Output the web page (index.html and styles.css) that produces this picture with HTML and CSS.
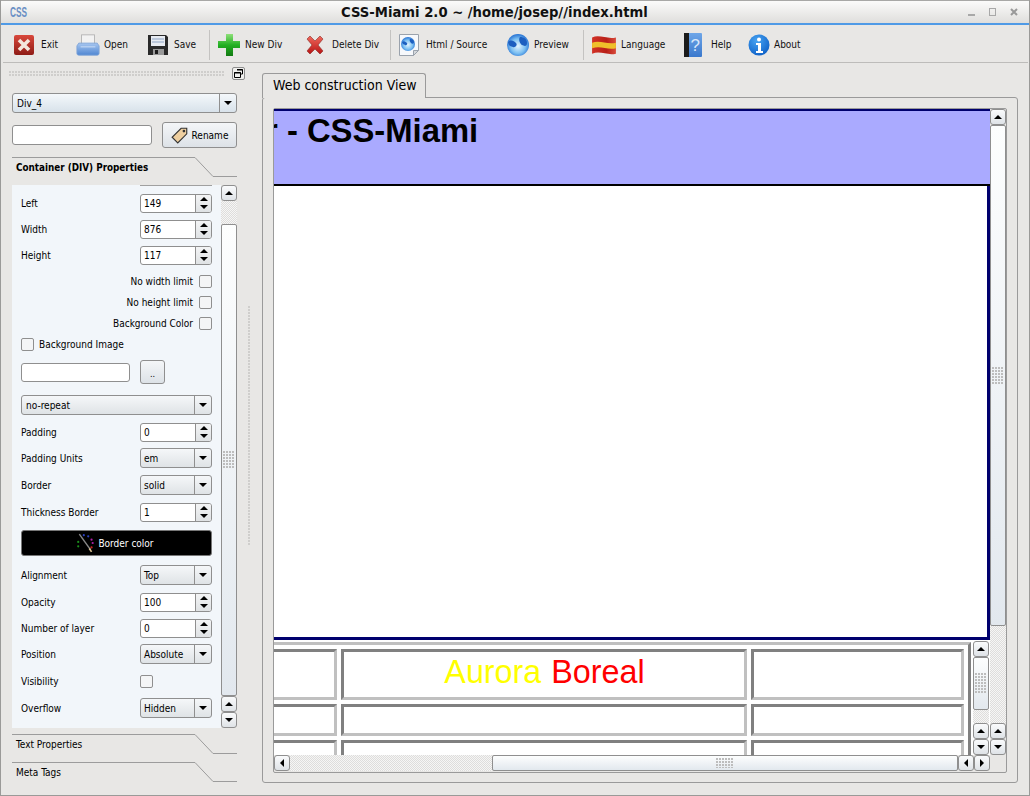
FILE: index.html
```html
<!DOCTYPE html>
<html lang="en">
<head>
<meta charset="utf-8">
<title>CSS-Miami 2.0</title>
<link rel="stylesheet" href="styles.css">
</head>
<body>
<svg class="defs" width="0" height="0" aria-hidden="true">
  <defs>
    <linearGradient id="gRed" x1="0" y1="0" x2="0" y2="1"><stop offset="0" stop-color="#d9483c"/><stop offset="1" stop-color="#8e1c16"/></linearGradient>
    <linearGradient id="gTray" x1="0" y1="0" x2="0" y2="1"><stop offset="0" stop-color="#a6c6f0"/><stop offset="1" stop-color="#4f86d2"/></linearGradient>
    <linearGradient id="gGreen" x1="0" y1="0" x2="0" y2="1"><stop offset="0" stop-color="#8fe07a"/><stop offset=".5" stop-color="#22b022"/><stop offset="1" stop-color="#127a12"/></linearGradient>
    <linearGradient id="gX" x1="0" y1="0" x2="0" y2="1"><stop offset="0" stop-color="#f0685c"/><stop offset="1" stop-color="#b81414"/></linearGradient>
    <radialGradient id="gGlobe" cx=".5" cy=".55" r=".6"><stop offset="0" stop-color="#e6f5fd"/><stop offset=".55" stop-color="#7cc0f2"/><stop offset="1" stop-color="#1260cc"/></radialGradient>
    <linearGradient id="gFlag" x1="0" y1="0" x2="1" y2="0"><stop offset="0" stop-color="#d23226"/><stop offset=".6" stop-color="#b82018"/><stop offset="1" stop-color="#d84a3a"/></linearGradient>
    <linearGradient id="gBook" x1="0" y1="0" x2="0" y2="1"><stop offset="0" stop-color="#6ea6e8"/><stop offset="1" stop-color="#3a78cc"/></linearGradient>
    <radialGradient id="gInfo" cx=".4" cy=".3" r=".8"><stop offset="0" stop-color="#48a4f2"/><stop offset="1" stop-color="#0a5cc4"/></radialGradient>
  </defs>
</svg>
<div class="window">
  <header class="titlebar">
    <span class="app-logo">CSS</span>
    <span class="title">CSS-Miami 2.0 ~ /home/josep//index.html</span>
    <div class="win-btns">
      <svg width="10" height="10" viewBox="0 0 10 10"><rect x="1" y="7" width="7" height="2" fill="#a8a8a8"/></svg>
      <svg width="10" height="10" viewBox="0 0 10 10"><rect x="1.500" y="1.500" width="6" height="7" fill="none" stroke="#a8a8a8"/></svg>
      <svg width="10" height="10" viewBox="0 0 10 10"><path d="M2 2l6 6M8 2l-6 6" stroke="#999" stroke-width="2"/></svg>
    </div>
  </header>
  <nav class="toolbar">
    <button class="tool t-exit"><svg width="24" height="24" viewBox="0 0 24 24"><rect x="2" y="2" width="20" height="20" rx="2" fill="url(#gRed)"/><path d="M7 7l10 10M17 7L7 17" stroke="#f4e6dc" stroke-width="3.600"/></svg><span>Exit</span></button>
    <button class="tool t-open"><svg width="24" height="24" viewBox="0 0 26 24"><rect x="6" y="1" width="14" height="11" fill="#f2f2f2" stroke="#b4b4b4"/><path d="M3 10h20l2 3v8a2 2 0 0 1-2 2H3a2 2 0 0 1-2-2v-8z" fill="url(#gTray)" stroke="#7ea4d8"/><path d="M5 14h16" stroke="#cfe0f6"/></svg><span>Open</span></button>
    <button class="tool t-save"><svg width="22" height="24" viewBox="0 0 22 24"><path d="M1 2h18l2 2v18H1z" fill="#2a2a2a"/><rect x="4" y="3" width="14" height="10" fill="#e8ecf2"/><path d="M5 6h12M5 9h12" stroke="#8ea4c4"/><rect x="6" y="16" width="11" height="6" fill="#9a9a9a"/><rect x="8" y="17" width="3" height="4" fill="#1c1c1c"/></svg><span>Save</span></button>
    <i class="tsep"></i>
    <button class="tool t-new"><svg width="24" height="24" viewBox="0 0 24 24"><path d="M9 1h7v7h7v7h-7v8H9v-8H1V8h8z" fill="url(#gGreen)"/></svg><span>New Div</span></button>
    <button class="tool t-del"><svg width="22" height="22" viewBox="1 0 20 22"><path d="M3 5l3-3 5 5 5-5 3 3-5 6 5 6-3 3-5-5-5 5-3-3 5-6z" fill="url(#gX)" stroke="#8c2a24" stroke-width=".6"/></svg><span>Delete Div</span></button>
    <i class="tsep"></i>
    <button class="tool t-html"><svg width="20" height="24" viewBox="0 0 20 24"><path d="M.5 1.500h19v16l-5 5H.5z" fill="#f6f8fb" stroke="#9aa2ac"/><path d="M19.500 17.500h-5v5z" fill="#d4d8dc" stroke="#9aa2ac"/><circle cx="9" cy="11" r="7" fill="url(#gGlobe)"/><path d="M3 9c2-2 4 0 5 1s-1 3-2 2-2 0-3-3zM11 6c2 0 4 1 4 3s-2 2-3 1-2-3-1-4z" fill="#1d5fc0"/></svg><span>Html / Source</span></button>
    <button class="tool t-prev"><svg width="24" height="24" viewBox="0 0 24 24"><circle cx="12" cy="12" r="11" fill="url(#gGlobe)"/><path d="M2 9c3-3 6-1 8 1s-1 5-3 4-4 0-5-5zM14 4c4 0 7 2 7 6s-3 3-5 2-4-6-2-8z" fill="#1d5fc0"/></svg><span>Preview</span></button>
    <i class="tsep"></i>
    <button class="tool t-lang"><svg width="26" height="22" viewBox="0 0 24 20"><path d="M1 3c7-3 14 2 22 0v15c-8 2-14-3-22 0z" fill="url(#gFlag)"/><path d="M1 8c7-3 14 2 22 0v5c-8 2-14-3-22 0z" fill="#efc02a"/></svg><span>Language</span></button>
    <button class="tool t-help"><svg width="18" height="26" viewBox="0 0 18 26"><rect x="0" y="1" width="18" height="24" rx="1" fill="url(#gBook)"/><rect x="0" y="1" width="5" height="24" fill="#1b1b1b"/><text x="6.500" y="19" class="q">?</text></svg><span>Help</span></button>
    <button class="tool t-about"><svg width="22" height="24" viewBox="0 0 22 24"><circle cx="11" cy="12" r="10.500" fill="url(#gInfo)"/><circle cx="11" cy="6.500" r="2" fill="#fff"/><path d="M8 10h5v8h2v2H8v-2h2v-6H8z" fill="#fff"/></svg><span>About</span></button>
  </nav>

  <div class="main">
    <aside class="side">
      <div class="dock-top"><div class="grip"></div><div class="float"><svg width="9" height="9" viewBox="0 0 9 9"><path d="M3 .5h5.500V5H7M.5 3.500h6v5h-6z" fill="none" stroke="#000"/><path d="M3 1h6M0 4h7" stroke="#000"/></svg></div></div>
      <div class="combo c-div"><span>Div_4</span><b><i class="dn"></i></b></div>
      <div class="rename-row">
        <div class="input r-input"></div>
        <div class="btn r-btn"><svg width="18" height="18" viewBox="0 0 16 16"><path d="M9 2h5v5l-8 8-5-5z" fill="#eecfa0" stroke="#333"/><circle cx="11.500" cy="4.500" r="1.200" fill="#333"/></svg><span>Rename</span></div>
      </div>
      <div class="tab-h t-active"><span class="bold">Container (DIV) Properties</span><svg class="tabline" width="225" height="20" viewBox="0 0 225 20"><path d="M0 .5h183L201 19.500h24" fill="none" stroke="#9c9c9c"/></svg></div>
      <div class="pane">
        <div class="form">
          <div class="clip-top"></div>
          <div class="row r-left"><label>Left</label><div class="spin"><span>149</span><b><i class="up"></i><i class="dn"></i></b></div></div>
          <div class="row"><label>Width</label><div class="spin"><span>876</span><b><i class="up"></i><i class="dn"></i></b></div></div>
          <div class="row"><label>Height</label><div class="spin"><span>117</span><b><i class="up"></i><i class="dn"></i></b></div></div>
          <div class="crow c-first"><label>No width limit</label><i class="check"></i></div>
          <div class="crow"><label>No height limit</label><i class="check"></i></div>
          <div class="crow"><label>Background Color</label><i class="check"></i></div>
          <div class="crow left"><i class="check"></i><label>Background Image</label></div>
          <div class="file-row"><div class="input f-input"></div><div class="btn f-btn">..</div></div>
          <div class="combo c-rep"><span>no-repeat</span><b><i class="dn"></i></b></div>
          <div class="row r-pad"><label>Padding</label><div class="spin"><span>0</span><b><i class="up"></i><i class="dn"></i></b></div></div>
          <div class="row"><label>Padding Units</label><div class="combo c-s"><span>em</span><b><i class="dn"></i></b></div></div>
          <div class="row r-c2"><label>Border</label><div class="combo c-s"><span>solid</span><b><i class="dn"></i></b></div></div>
          <div class="row r-c3"><label>Thickness Border</label><div class="spin"><span>1</span><b><i class="up"></i><i class="dn"></i></b></div></div>
          <div class="color-btn"><svg width="20" height="20" viewBox="0 0 18 18"><g fill="#1b8f1b"><circle cx="2" cy="8" r="1"/><circle cx="2" cy="12" r="1"/></g><g fill="#2a3fbf"><circle cx="7" cy="2" r="1"/><circle cx="11" cy="3" r="1"/></g><g fill="#b01fa8"><circle cx="14" cy="6" r="1"/><circle cx="15" cy="9" r="1"/></g><circle cx="14" cy="13" r="1" fill="#c22"/><path d="M3 1l10 14" stroke="#888" stroke-width="1.300"/><path d="M12 14l2 3" stroke="#d8c090" stroke-width="1.500"/></svg><span>Border color</span></div>
          <div class="row r-al"><label>Alignment</label><div class="combo c-s"><span>Top</span><b><i class="dn"></i></b></div></div>
          <div class="row r-op"><label>Opacity</label><div class="spin"><span>100</span><b><i class="up"></i><i class="dn"></i></b></div></div>
          <div class="row"><label>Number of layer</label><div class="spin"><span>0</span><b><i class="up"></i><i class="dn"></i></b></div></div>
          <div class="row"><label>Position</label><div class="combo c-s"><span>Absolute</span><b><i class="dn"></i></b></div></div>
          <div class="row r-vis"><label>Visibility</label><div class="vis-cell"><i class="check"></i></div></div>
          <div class="row r-ov"><label>Overflow</label><div class="combo c-s"><span>Hidden</span><b><i class="dn"></i></b></div></div>
        </div>
        <div class="vbar side-bar">
          <div class="sb-btn"><i class="up"></i></div>
          <div class="sb-track small"></div>
          <div class="sb-thumb long"><div class="dots d4x6"></div></div>
          <div class="sb-btn"><i class="up"></i></div>
          <div class="sb-btn"><i class="dn"></i></div>
        </div>
      </div>
      <div class="tab-h t-text"><span>Text Properties</span><svg class="tabline" width="225" height="20" viewBox="0 0 225 20"><path d="M0 .5h183L201 19.500h24" fill="none" stroke="#9c9c9c"/></svg></div>
      <div class="tab-h t-meta"><span>Meta Tags</span><svg class="tabline" width="225" height="20" viewBox="0 0 225 20"><path d="M0 .5h183L201 19.500h24" fill="none" stroke="#9c9c9c"/></svg></div>
    </aside>
    <div class="splitter"><div class="split-dots"></div></div>
    <section class="work">
      <div class="tab-top">Web construction View</div>
      <div class="tab-pane">
        <div class="view">
          <div class="viewport">
            <div class="page">
              <div class="hero"><h1>r - CSS-Miami</h1></div>
              <div class="canvas-div"></div>
              <div class="outer-table">
                <div class="t-row h1r">
                  <div class="cell c1"></div>
                  <div class="cell c2"><span class="aurora"><em>Aurora</em> <strong>Boreal</strong></span></div>
                  <div class="cell c3"></div>
                </div>
                <div class="t-row h2r">
                  <div class="cell c1"></div><div class="cell c2"></div><div class="cell c3"></div>
                </div>
                <div class="t-row h3r">
                  <div class="cell c1"></div><div class="cell c2"></div><div class="cell c3"></div>
                </div>
              </div>
              <div class="inner-v">
                <div class="sb-btn"><i class="up"></i></div>
                <div class="sb-thumb iv"><div class="dots d4x5"></div></div>
                <div class="sb-track"></div>
                <div class="sb-btn"><i class="up"></i></div>
                <div class="sb-btn"><i class="dn"></i></div>
              </div>
            </div>
            <div class="vbar main-v">
              <div class="sb-btn"><i class="up"></i></div>
              <div class="sb-thumb mv"><div class="dots d4x6"></div></div>
              <div class="sb-track"></div>
              <div class="sb-btn"><i class="up"></i></div>
              <div class="sb-btn"><i class="dn"></i></div>
            </div>
          </div>
          <div class="hbar">
            <div class="sb-btn h"><i class="lf"></i></div>
            <div class="sb-track h1"></div>
            <div class="sb-thumb hz"><div class="dots d6x3"></div></div>
            <div class="sb-btn h"><i class="lf"></i></div>
            <div class="sb-btn h"><i class="rt"></i></div>
            <div class="corner"></div>
          </div>
        </div>
      </div>
    </section>
  </div>
</div>
</body>
</html>
```

FILE: styles.css
```css
* { box-sizing: border-box; }
html, body { margin: 0; padding: 0; }
body { width: 1030px; height: 796px; overflow: hidden; background: #e8e7e5; font-family: "DejaVu Sans Condensed", "DejaVu Sans", sans-serif; font-stretch: condensed; font-size: 10px; color: #000; }
.defs { position: absolute; }
.window { width: 1030px; height: 796px; display: flex; flex-direction: column; border-left: 1px solid #9a9a98; border-right: 1px solid #9a9a98; border-bottom: 1px solid #9a9a98; position: relative; }
.titlebar { height: 25px; flex: none; display: flex; align-items: center; position: relative; border-top: 1px solid #a8a8a6; border-bottom: 2px solid #4f9ae6; background: linear-gradient(#fbfbfa, #dfdedc); padding: 0 0 1px 9px; }
.app-logo { font-family: "Liberation Sans", sans-serif; font-weight: 700; font-size: 15px; color: #6a8fc4; transform: scaleX(.55); transform-origin: left center; width: 20px; }
.title { position: absolute; left: 340px; top: 4px; font-family: "DejaVu Sans", sans-serif; font-stretch: normal; font-size: 13.200px; font-weight: 700; color: #111; white-space: nowrap; }
.win-btns { margin-left: auto; display: flex; gap: 11px; padding-right: 10px; }
.toolbar { height: 38px; flex: none; display: flex; align-items: center; border-bottom: 1px solid #bdbcba; margin: 0 1px 0 2px; padding: 2px 0 0 9px; position: relative; }
.tool { appearance: none; border: 0; background: none; padding: 0; margin: 0; height: 30px; display: flex; align-items: center; font: inherit; color: #111; white-space: nowrap; flex: none; }
.t-exit { width: 64px; gap: 5px; }
.t-open { width: 71px; gap: 4px; }
.t-save { width: 62px; gap: 5px; }
.t-new { width: 87px; gap: 4px; margin-left: 7px; }
.t-del { width: 86px; gap: 6px; }
.t-html { width: 107px; gap: 7px; margin-left: 8px; }
.t-prev { width: 77px; gap: 4px; }
.t-lang { width: 93px; gap: 4px; margin-left: 7px; }
.t-help { width: 64px; gap: 9px; }
.t-about { gap: 4px; }
.q { font: 17px "Liberation Sans", sans-serif; fill: #d8e8fa; }
.tsep { width: 1px; height: 30px; background: #c4c3c1; flex: none; }
.main { flex: 1; display: flex; min-height: 0; }
.side { width: 237px; flex: none; padding-left: 11px; display: flex; flex-direction: column; }
.dock-top { height: 30px; width: 236px; flex: none; display: flex; align-items: flex-start; gap: 7px; padding-top: 4px; margin-left: -3px; }
.grip { width: 216px; flex: none; height: 5px; margin-top: 4px; background-image: radial-gradient(circle at 1px 1px, #cfcecc 1px, transparent 1.200px); background-size: 3px 3px; }
.float { width: 13px; height: 13px; flex: none; border: 1px solid #8d8d8d; border-radius: 2px; background: #f0f0ee; display: flex; align-items: center; justify-content: center; }
.combo { display: flex; align-items: center; height: 20px; border: 1px solid #8f8f8f; border-radius: 3px; background: linear-gradient(#f5f7f9, #dfe3e6); overflow: hidden; }
.combo span { flex: 1; padding-left: 4px; white-space: nowrap; }
.combo b { width: 17px; height: 100%; border-left: 1px solid #8f8f8f; display: flex; align-items: center; justify-content: center; flex: none; }
.c-div { width: 225px; background: linear-gradient(#f4f8fb, #d8e2ea); }
.up, .dn, .lf, .rt { display: block; width: 0; height: 0; }
.up { border-left: 4px solid transparent; border-right: 4px solid transparent; border-bottom: 4px solid #000; }
.dn { border-left: 4px solid transparent; border-right: 4px solid transparent; border-top: 4px solid #000; }
.lf { border-top: 4px solid transparent; border-bottom: 4px solid transparent; border-right: 4px solid #000; }
.rt { border-top: 4px solid transparent; border-bottom: 4px solid transparent; border-left: 4px solid #000; }
.rename-row { display: flex; align-items: center; margin-top: 9px; height: 26px; gap: 10px; }
.input { background: #fff; border: 1px solid #8f8f8f; border-radius: 3px; height: 20px; }
.r-input { width: 140px; }
.btn { border: 1px solid #8f8f8f; border-radius: 3px; background: linear-gradient(#f4f6f8, #dde2e7); display: flex; align-items: center; justify-content: center; }
.r-btn { width: 75px; height: 26px; gap: 3px; }
.tab-h { height: 20px; position: relative; width: 225px; flex: none; padding-left: 4px; line-height: 21px; }
.tab-h span { position: relative; }
.tabline { position: absolute; left: 0; top: 0; }
.bold { font-weight: 700; font-size: 9.800px; }
.t-active { margin-top: 9px; }
.t-text { margin-top: 6px; }
.t-meta { margin-top: 8px; }
.pane { display: flex; width: 225px; height: 543px; margin-top: 8px; flex: none; }
.form { width: 209px; height: 543px; background: #f2f6fa; padding: 0 9px; overflow: hidden; }
.clip-top { height: 1px; width: 72px; margin-left: 119px; border-bottom: 1px solid #a0a0a0; }
.row { display: flex; align-items: center; justify-content: space-between; height: 20px; margin-top: 6px; }
.r-left { margin-top: 7px; }
.row label { white-space: nowrap; }
.spin { width: 72px; height: 19px; border: 1px solid #8f8f8f; border-radius: 3px; background: #fff; display: flex; align-items: center; overflow: hidden; }
.spin span { flex: 1; padding-left: 3px; }
.spin b { width: 16px; height: 100%; border-left: 1px solid #8f8f8f; display: flex; flex-direction: column; align-items: center; justify-content: space-around; background: linear-gradient(#f3f4f5, #dfe2e4); flex: none; }
.crow { display: flex; align-items: center; justify-content: flex-end; height: 14px; margin-top: 7px; gap: 6px; }
.c-first { margin-top: 9px; }
.crow.left { justify-content: flex-start; gap: 5px; }
.check { display: block; width: 13px; height: 13px; border: 1px solid #8f8f8f; border-radius: 2px; background: #f4f5f6; flex: none; }
.file-row { display: flex; align-items: center; height: 24px; gap: 10px; margin-top: 9px; }
.f-input { width: 109px; height: 19px; }
.f-btn { width: 25px; height: 24px; font-size: 9px; padding-top: 3px; }
.c-rep { width: 191px; margin-top: 11px; }
.c-s { width: 72px; }
.c-s span { padding-left: 3px; }
.r-pad { margin-top: 7px; }
.r-c2 { margin-top: 7px; }
.r-c3 { margin-top: 7px; }
.color-btn { width: 191px; height: 26px; margin-top: 8px; border: 1px solid #777; border-radius: 3px; background: #000; color: #fff; display: flex; align-items: center; justify-content: center; gap: 2px; padding-right: 3px; }
.r-al { margin-top: 9px; }
.r-op { margin-top: 7px; }
.r-vis { margin-top: 7px; }
.vis-cell { width: 72px; }
.r-ov { margin-top: 7px; }
.vbar { display: flex; flex-direction: column; flex: none; }
.side-bar { width: 16px; height: 543px; }
.sb-btn { height: 16px; width: 16px; border: 1px solid #8f8f8f; border-radius: 3px; background: linear-gradient(#fafbfc, #dfe3e7); display: flex; align-items: center; justify-content: center; flex: none; }
.sb-track { flex: 1; background-color: #f4f4f3; background-image: repeating-conic-gradient(#dedddc 0 25%, #f6f6f5 0 50%); background-size: 2px 2px; }
.sb-track.small { flex: none; height: 23px; }
.sb-thumb { border: 1px solid #8f8f8f; border-radius: 2px; background: linear-gradient(#fdfefe, #e2e8ee); display: flex; align-items: center; justify-content: center; flex: none; }
.sb-thumb.long { height: 472px; }
.dots { background-image: radial-gradient(circle at 1px 1px, #bdbdbd 1px, transparent 1.100px); background-size: 3px 3px; }
.d4x6 { width: 12px; height: 18px; }
.d4x5 { width: 12px; height: 21px; }
.d6x3 { width: 18px; height: 10px; }
.splitter { width: 24px; flex: none; display: flex; justify-content: center; align-items: center; padding: 0 1px 6px 0; }
.split-dots { width: 3px; height: 240px; background-image: radial-gradient(circle at 1px 1px, #cfcecc 1px, transparent 1.100px); background-size: 3px 3px; }
.work { flex: none; width: 756px; padding-top: 10px; display: flex; flex-direction: column; }
.tab-top { width: 164px; height: 25px; flex: none; border: 1px solid #9a9a9a; border-bottom: 0; border-radius: 3px 3px 0 0; font-size: 14px; padding: 3px 0 0 10px; white-space: nowrap; background: #e8e7e5; position: relative; z-index: 1; margin-bottom: -1px; }
.tab-pane { width: 756px; height: 686px; border: 1px solid #9a9a9a; border-radius: 3px; padding: 10px 10px 10px 10px; }
.view { width: 734px; height: 665px; border: 1px solid #9a9a9a; border-radius: 2px; display: flex; flex-direction: column; }
.viewport { height: 646px; flex: none; display: flex; overflow: hidden; }
.page { width: 716px; flex: none; background: #fff; overflow: hidden; position: relative; }
.hero { height: 77px; background: #aaf; border-top: 2px solid #00006e; border-bottom: 2px solid #000; overflow: hidden; }
.hero h1 { margin: 0; font: 700 32.800px/40px "Liberation Sans", sans-serif; font-stretch: normal; white-space: nowrap; margin-left: -9px; }
.canvas-div { height: 454px; border-right: 3px solid #00006e; border-bottom: 3px solid #00006e; background: #fff; }
.outer-table { margin-top: 2px; border-top: 3px solid #c0c0c0; border-right: 3px solid #808080; padding: 4px 4px 0 0; width: 697px; }
.t-row { display: flex; gap: 4px; margin-bottom: 4px; }
.cell { border: 3px solid; border-color: #808080 #c0c0c0 #c0c0c0 #808080; background: #fff; flex: none; }
.c1 { width: 63px; border-left: 0; }
.c2 { width: 406px; }
.c3 { width: 213px; }
.h1r .cell { height: 51px; }
.h2r .cell { height: 32px; }
.h3r .cell { height: 22px; border-bottom: 0; }
.aurora { display: block; text-align: center; font: 32.300px/38px "Liberation Sans", sans-serif; font-stretch: normal; padding: 1px 0 0 1px; word-spacing: 1px; }
.aurora em { font-style: normal; color: #ff0; }
.aurora strong { font-weight: 400; color: #f00; }
.inner-v { position: absolute; left: 699px; top: 532px; width: 16px; height: 114px; display: flex; flex-direction: column; }
.sb-thumb.iv { height: 53px; width: 16px; }
.main-v { width: 16px; }
.sb-thumb.mv { height: 501px; }
.hbar { display: flex; height: 16px; flex: none; }
.sb-btn.h { width: 16px; height: 16px; }
.sb-track.h1 { width: 202px; flex: none; }
.sb-thumb.hz { width: 466px; height: 16px; }
.corner { flex: 1; }
```
